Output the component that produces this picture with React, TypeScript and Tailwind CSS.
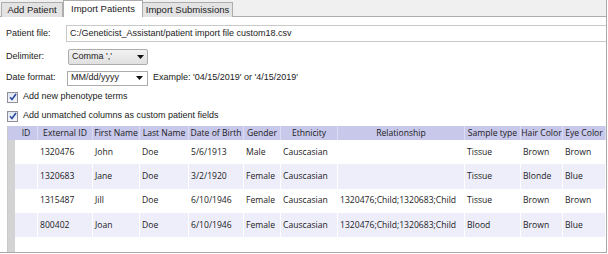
import React from 'react';

type Row = {
  ext: string;
  first: string;
  last: string;
  dob: string;
  gender: string;
  eth: string;
  rel: string;
  sample: string;
  hair: string;
  eye: string;
};

const rows: Row[] = [
  { ext: '1320476', first: 'John', last: 'Doe', dob: '5/6/1913', gender: 'Male', eth: 'Causcasian', rel: '', sample: 'Tissue', hair: 'Brown', eye: 'Brown' },
  { ext: '1320683', first: 'Jane', last: 'Doe', dob: '3/2/1920', gender: 'Female', eth: 'Causcasian', rel: '', sample: 'Tissue', hair: 'Blonde', eye: 'Blue' },
  { ext: '1315487', first: 'Jill', last: 'Doe', dob: '6/10/1946', gender: 'Female', eth: 'Causcasian', rel: '1320476;Child;1320683;Child', sample: 'Tissue', hair: 'Brown', eye: 'Brown' },
  { ext: '800402', first: 'Joan', last: 'Doe', dob: '6/10/1946', gender: 'Female', eth: 'Causcasian', rel: '1320476;Child;1320683;Child', sample: 'Blood', hair: 'Brown', eye: 'Blue' },
];

const cols = [
  { key: 'id', label: 'ID', w: 'w-[23px]' },
  { key: 'ext', label: 'External ID', w: 'w-[55px]' },
  { key: 'first', label: 'First Name', w: 'w-[47px]' },
  { key: 'last', label: 'Last Name', w: 'w-[49px]' },
  { key: 'dob', label: 'Date of Birth', w: 'w-[55px]' },
  { key: 'gender', label: 'Gender', w: 'w-[37px]' },
  { key: 'eth', label: 'Ethnicity', w: 'w-[57px]' },
  { key: 'rel', label: 'Relationship', w: 'w-[127px]' },
  { key: 'sample', label: 'Sample type', w: 'w-[56px]' },
  { key: 'hair', label: 'Hair Color', w: 'w-[42px]' },
  { key: 'eye', label: 'Eye Color', w: 'w-[43px]' },
] as const;

const Arrow = () => (
  <svg width="7" height="4" viewBox="0 0 7 4" className="shrink-0">
    <path d="M0 0h7L3.5 4z" fill="#111" />
  </svg>
);

const Check = ({ label }: { label: string }) => (
  <div className="flex items-center h-[18px] pl-[7px] gap-[5px]">
    <div className="w-[11px] h-[11px] border border-[#8e8f99] bg-gradient-to-b from-[#dfe6f0] to-[#f4f6fa] flex items-center justify-center">
      <svg width="8" height="8" viewBox="0 0 8 8">
        <path d="M1 4.2L3 6.5L7 1" stroke="#2c4aa0" strokeWidth="1.6" fill="none" />
      </svg>
    </div>
    <span>{label}</span>
  </div>
);

export default function App() {
  return (
    <div className="w-[608px] h-[254px] bg-white text-[9px] text-[#222] overflow-hidden" style={{ fontFamily: '"Liberation Sans", Arial, sans-serif' }}>
      <div className="w-[607px] h-[253px] border-r border-b border-[#a9a9a9] flex flex-col">
        {/* tabs */}
        <div className="h-[17px] bg-[#f0f0f0] border-b border-[#adadad] flex items-end pl-[1px] shrink-0 text-[9.5px]">
          <div className="h-[15px] w-[62px] bg-[#e3e3e3] border border-b-0 border-[#adadad] flex items-center justify-center mb-[-1px]">Add Patient</div>
          <div className="h-[17px] w-[80px] bg-white border border-b-0 border-[#adadad] flex items-center justify-center mb-[-1px] relative z-10">Import Patients</div>
          <div className="h-[15px] w-[90px] bg-[#e3e3e3] border border-b-0 border-l-0 border-[#adadad] flex items-center justify-center mb-[-1px]">Import Submissions</div>
        </div>

        <div className="h-[8px] shrink-0" />
        <div className="flex items-center h-[17px] shrink-0">
          <span className="w-[66px] pl-[6px]">Patient file:</span>
          <div className="flex-1 h-[17px] border-t border-b border-l border-[#c9c9c9] flex items-center pl-[3px]">C:/Geneticist_Assistant/patient import file custom18.csv</div>
        </div>

        <div className="flex items-center h-[17px] mt-[6px] shrink-0">
          <span className="w-[68px] pl-[6px]">Delimiter:</span>
          <div className="w-[80px] h-[16px] border border-[#acacac] rounded-[2px] bg-gradient-to-b from-[#f2f2f2] to-[#e0e0e0] flex items-center justify-between px-[3px]">
            <span>Comma ','</span>
            <Arrow />
          </div>
        </div>

        <div className="flex items-center h-[16px] mt-[5px] shrink-0">
          <span className="w-[67px] pl-[6px]">Date format:</span>
          <div className="w-[81px] h-[15px] border border-[#acacac] bg-white flex items-center justify-between pl-[3px] pr-[4px]">
            <span>MM/dd/yyyy</span>
            <Arrow />
          </div>
          <span className="ml-[5px]">Example: '04/15/2019' or '4/15/2019'</span>
        </div>

        <div className="mt-[2px] shrink-0">
          <Check label="Add new phenotype terms" />
        </div>
        <div className="mt-[1px] shrink-0">
          <Check label="Add unmatched columns as custom patient fields" />
        </div>

        {/* table */}
        <div className="mt-[1px] ml-[7px] flex-1 flex border-l border-[#c9c9c9]" style={{ fontFamily: '"Open Sans", "Noto Sans", sans-serif' }}>
          <div className="w-[8px] bg-[#d3d3d3] flex flex-col">
            <div className="h-[14px] bg-[#c8c8ea]" />
          </div>
          <div className="flex-1 flex flex-col text-[8.6px] text-[#1a1a1a]">
            <div className="flex h-[14px] bg-[#c8c8ea] leading-[14px]">
              {cols.map((c) => (
                <div key={c.key} className={`${c.w} text-center border-r border-[#dcdcf2] whitespace-nowrap overflow-hidden`}>{c.label}</div>
              ))}
            </div>
            {rows.map((r, i) => (
              <div key={r.ext} className={`flex h-[24.3px] items-center ${i % 2 === 1 ? 'bg-[#eeeefa]' : 'bg-white'}`}>
                {cols.map((c) => (
                  <div key={c.key} className={`${c.w} h-full flex items-center pl-[2px] border-r border-white whitespace-nowrap overflow-hidden`}>
                    {c.key === 'id' ? '' : (r as any)[c.key]}
                  </div>
                ))}
              </div>
            ))}
          </div>
        </div>
      </div>
    </div>
  );
}
